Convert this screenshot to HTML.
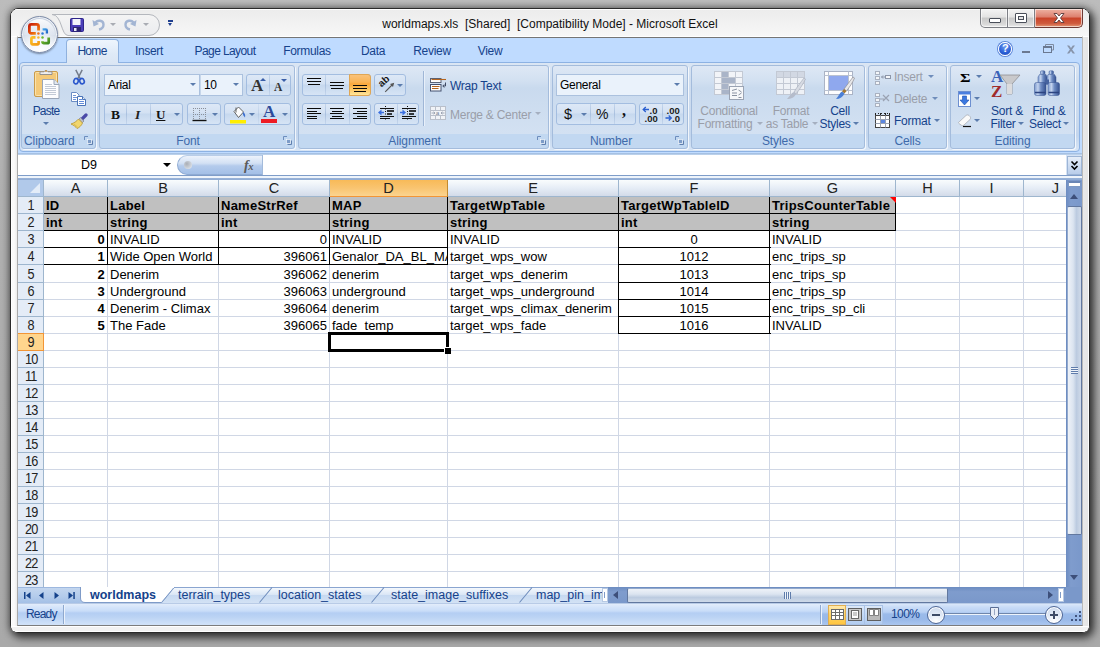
<!DOCTYPE html>
<html><head><meta charset="utf-8"><title>worldmaps.xls - Microsoft Excel</title>
<style>
html,body{margin:0;padding:0}
body{width:1100px;height:647px;overflow:hidden;position:relative;background:linear-gradient(#bcbcbc,#b0b0b0 30%,#a9a9a9);font-family:"Liberation Sans",sans-serif;font-size:12px;color:#15428b}
#win{position:absolute;left:0;top:0;width:1100px;height:647px}
#win div,#win span,#win i,#win b,#win svg{position:absolute;box-sizing:border-box}
.frame{left:10px;top:8px;width:1080px;height:625px;border:1px solid #2a2a2a;border-radius:8px;background:linear-gradient(90deg,#f6f6f6,#fbfbfb 3px,#e6e6e6 7px,#fcfcfc 8px,#fcfcfc 1066px,#e9e9e9 1072px,#e4e4e4);box-shadow:3px 4px 9px 1px rgba(0,0,0,.62),0 0 7px 1px rgba(0,0,0,.35)}
.frame:after{content:"";position:absolute;left:0;top:0;right:0;bottom:0;border:1px solid rgba(255,255,255,.9);border-radius:7px}
.t{white-space:nowrap;line-height:14px}
/* title */
.title{left:250px;top:17px;width:600px;text-align:center;color:#111;font-size:12px;line-height:14px;white-space:pre;letter-spacing:0}
/* tab bar */
.tabbar{left:18px;top:37px;width:1064px;height:26px;background:#bfdbff;border-top:1px solid #757575}
.tab{top:44px;letter-spacing:-.3px;height:15px;line-height:15px;font-size:12px;color:#15428b;white-space:nowrap;transform:translateX(-50%)}
.hometab{left:66px;top:39px;width:53px;height:24px;border:1px solid #8fb1de;border-bottom:0;border-radius:4px 4px 0 0;background:linear-gradient(#eef5fd,#dfeaf7 60%,#dbe6f4)}
/* ribbon */
.ribbon{left:18px;top:62px;width:1064px;height:91px;background:#bfdbff}
.ribin{left:1px;top:0;width:1061px;height:90px;border:1px solid #8db2e3;border-radius:4px;background:linear-gradient(#dbe6f4,#d0def0 18%,#c8d9ee 70%,#c3d6ee 82%,#d7e5f6);}
.grp{top:65px;height:84px;border:1px solid #a4bcdc;border-radius:3px;background:linear-gradient(#dee8f5,#d2e0f1 15px,#c9daee 22px,#d3e1f2 68px,#c2d8f1 68px,#c2d8f1);box-shadow:1px 1px 0 rgba(255,255,255,.75)}
.grp>.lbl{left:0;right:0;bottom:0;height:15px;line-height:17px;letter-spacing:-.1px;text-align:center;color:#3e6aaa;font-size:12px}
.dl{width:9px;height:9px}
.bg{border:1px solid #a3bde0;border-radius:3px;background:linear-gradient(#dde8f6,#d3e1f3 45%,#c6d8ee 50%,#d6e4f5);height:22px}
.bg i{top:0;width:1px;height:20px;background:linear-gradient(#c5d6ec,#a9c0df 50%,#c5d6ec)}
.combo{border:1px solid #abc1de;background:#eaf2fb;height:22px;line-height:21px;letter-spacing:-.3px;color:#000;font-size:12px;padding-left:3px}
.arr{width:0;height:0;border-left:3px solid transparent;border-right:3px solid transparent;border-top:3px solid #5b7cad}
.bt{margin-top:1px;letter-spacing:-.25px;font-size:12px;color:#15428b;white-space:nowrap;line-height:13px}
#win .dis{color:#9a9ea9}
.ctr{transform:translateX(-50%);text-align:center}
/* formula bar */
.fbarbg{left:18px;top:153px;width:1064px;height:27px;background:#d5e3f5}
/* grid */
#grid{left:18px;top:180px;width:1048px;height:407px;background:#fff;overflow:hidden;font-size:13px;color:#000}
.corner{left:0;top:0;width:26px;height:17px;background:#b1c9ea;border-right:1px solid #9eb6ce;border-bottom:1px solid #9eb6ce}
.corner i{right:3px;bottom:3px;width:0;height:0;border-left:10px solid transparent;border-bottom:10px solid #e3ecf8}
.ch{top:0;height:17px;line-height:16px;text-align:center;background:linear-gradient(#f9fcfd,#e6edf6 50%,#d3dbe9);border-bottom:1px solid #9eb6ce;font-size:14.6px;color:#222;box-shadow:1px 0 0 #9eb6ce}
.ch.sel{background:linear-gradient(#f8ba58,#f9c470 50%,#fbd48f);border-bottom:1px solid #f29536;box-shadow:1px 0 0 #c28a30}
.rh{left:0;width:26px;text-align:center;padding-left:1px;background:#e4ecf7;border-right:1px solid #9eb6ce;box-shadow:0 1px 0 #9eb6ce;font-size:14.6px;color:#222}
.rh.sel{background:#ffd58d;border-right:1px solid #f29536;box-shadow:0 1px 0 #f29536,0 -1px 0 #f29536}
.hl{left:26px;width:1030px;height:1px;background:#d0d7e5}
.vl{top:17px;width:1px;height:400px;background:#d0d7e5}
.gray{background:#c0c0c0}
.c{white-space:nowrap;overflow:visible;padding:0 2px 0 2px}
.c.b{font-weight:bold;letter-spacing:.25px}
.c.r{text-align:right}
.c.m{text-align:center}
.c.clip{overflow:hidden}
.bh{height:1px;background:#000}
.bv{width:1px;background:#000}
.cmt{width:0;height:0;border-left:6px solid transparent;border-top:6px solid #f00;transform:translateX(1px)}
.selbox{border:3px solid #000}
.fillh{width:7px;height:7px;background:#000;border-left:1px solid #fff;border-top:1px solid #fff}
/* formula bar */
.fb-top{left:18px;top:153px;width:1064px;height:2px;background:linear-gradient(#9cb9de,#c4d8f0)}
.namebox{left:18px;top:155px;width:159px;height:20px;background:#fff;color:#000;font-size:12.5px;line-height:20px}
.namebox span{left:63px;top:0}
.fxzone{left:177px;top:155px;width:85px;height:20px;background:#fff}
.fxpill{left:0;top:0;width:85px;height:20px;border-radius:10px 0 0 10px;background:linear-gradient(#edf3fb,#d3e1f4 40%,#b4cbec 55%,#a3bfe7);border:1px solid #8fabd3;border-right:0;border-top-color:#b9cde8}
.fxin{left:262px;top:155px;width:804px;height:20px;background:#fff;border-left:1px solid #a3bbdb}
.fxexp{left:1067px;top:156px;width:15px;height:19px;background:linear-gradient(#e6eef9,#cfdef2 50%,#b9cdea);border:1px solid #9db5d6}
.fb-bot{left:18px;top:175px;width:1064px;height:5px;background:linear-gradient(#7f9dc9 0,#7f9dc9 1px,#eef4fb 1px,#eef4fb 3px,#9ab4d9 3px,#8eaad3 5px)}
/* scrollbars */
.vsb{left:1066px;top:180px;width:16px;height:407px;background:linear-gradient(90deg,#6c8cc1,#7f9ccd 30%,#7a98ca)}
.vsplit{left:2px;top:1px;width:13px;height:6px;background:#fff;border:1px solid #7d99c4;border-top:2px solid #6a86b5}
.thumbv{left:1px;top:26px;width:15px;height:329px;border:1px solid #62789f;border-left-color:#93a9cc;border-radius:2px;background:linear-gradient(90deg,#eef2f8,#dbe4f0 40%,#bccbe0 65%,#cfdae9)}
.hsb{left:608px;top:587px;width:458px;height:16px;background:linear-gradient(#6c8cc1,#7f9ccd 30%,#7a98ca)}
.thumbh{left:19px;top:1px;width:321px;height:15px;border:1px solid #62789f;border-top-color:#93a9cc;border-radius:2px;background:linear-gradient(#eef2f8,#dbe4f0 40%,#bccbe0 65%,#cfdae9)}
.sbcorner{left:1066px;top:587px;width:16px;height:16px;background:#7a98ca}
.tri{width:0;height:0}
/* sheet tabs */
.tabstrip{left:18px;top:587px;width:590px;height:16px;background:linear-gradient(#9db8df 0,#9db8df 1px,#c3d6ef 1px,#b3cbeb 60%,#a4c0e6);overflow:hidden}
.stab{top:1px;height:15px;line-height:14px;font-size:12.5px;color:#15428b;white-space:nowrap}
.split{left:602px;top:588px;width:6px;height:14px;background:#fff;border:1px solid #b7c9e3}
/* status bar */
.status{left:18px;top:603px;width:1064px;height:22px;background:linear-gradient(#8ea9d2 0,#e3edfb 1px,#d6e5fa 4px,#c9ddf8 8px,#b4cef3 10px,#bbd3f4 14px,#cfe1f8 21px);font-size:12px}
.status2{left:804px;top:1px;width:260px;height:21px;background:linear-gradient(#dbe8fa 0,#c9dcf7 3px,#b9d1f4 8px,#9bbbea 10px,#98b8e8 15px,#aac6ef 21px)}
.ssep{top:2px;width:2px;height:19px;background:linear-gradient(90deg,#8fa9cf,#8fa9cf 1px,#eaf1fb 1px)}
.wbtns{left:980px;top:9px;width:103px;height:19px}
.wb{top:0;height:19px;border:1px solid #7d7f85;border-top:0;background:linear-gradient(#f4f4f4,#e3e3e3 45%,#c8c8c8 50%,#d9d9d9 85%,#ececec);box-shadow:inset 0 0 0 1px rgba(255,255,255,.6)}
.wb.cl{background:linear-gradient(#eeb3a4,#dd7f6d 45%,#c9432a 50%,#cf5a3d 80%,#e59a78);border-color:#6e3a35;border-left:0}
/* office button */
.obtn{left:21px;top:16px;width:37px;height:37px;border-radius:50%;border:1px solid #7e8ca8;background:radial-gradient(circle at 50% 100%,#ffffff 0,#f2f5fa 35%,#d5dde9 60%,#c3cddd 100%);box-shadow:0 1px 2px rgba(0,0,0,.4),inset 0 0 0 1px rgba(255,255,255,.7)}
.obtn:after{content:"";position:absolute;left:2px;top:2px;right:2px;height:16px;border-radius:16px 16px 0 0/16px 16px 0 0;background:linear-gradient(rgba(255,255,255,.9),rgba(226,232,243,.55))}
.zc{top:3px;width:18px;height:18px;border-radius:50%;border:1px solid #4f6796;background:radial-gradient(circle at 50% 90%,#fff,#dfe8f5 50%,#c9d6ea);box-shadow:inset 0 0 0 1px #fff}
#win .rh span{position:static;display:inline-block;transform:scaleX(.87);letter-spacing:-.8px}
.cborder{left:17px;top:36px;width:1066px;height:590px;border:1px solid #a9a9a9;border-right-color:#b9b9b9;border-top-color:#fff;border-bottom-color:#7c7c7c}
.tbar{left:11px;top:9px;width:1078px;height:28px;border-radius:7px 7px 0 0;background:linear-gradient(#fff 0,#fff 1px,#ececec 1px,#f7f7f7 27px,#fff 27px)}
.bstrip{left:11px;top:626px;width:1078px;height:6px;background:#f2f2f2;border-top:1px solid #fff;border-bottom:1px solid #fff;border-radius:0 0 7px 7px}

</style></head>
<body>
<div id="win">
<div class="frame"></div>
<div class="tbar"></div>
<div class="bstrip"></div>
<div class="cborder"></div>
<div class="title">worldmaps.xls  [Shared]  [Compatibility Mode] - Microsoft Excel</div>
<!-- QAT -->
<svg style="left:40px;top:12px" width="124" height="26" viewBox="0 0 124 26">
<defs><linearGradient id="qg" x1="0" y1="0" x2="0" y2="1"><stop offset="0" stop-color="#f4f4f4"/><stop offset="1" stop-color="#ebecef"/></linearGradient></defs>
<path d="M12 2.500H109a10.500 10.500 0 0 1 0 21H28C21 23.500 22 2.500 12 2.500z" fill="url(#qg)" stroke="#b4b7bd"/>
</svg>
<svg style="left:70px;top:18px" width="14" height="14" viewBox="0 0 14 14"><rect x=".5" y=".5" width="13" height="13" rx="1" fill="#4a3db8" stroke="#2e2589"/><rect x="2.500" y="1" width="8" height="6" fill="#f3f4fb"/><rect x="3" y="9" width="8" height="4.500" fill="#2b2470"/><rect x="4" y="10" width="2.500" height="3" fill="#e9e9f4"/></svg>
<svg style="left:92px;top:17px" width="14" height="14" viewBox="0 0 14 14"><path d="M3 6.500C5 2.500 11.500 3 11.500 7.500c0 3-2 4.500-4.500 5" fill="none" stroke="#a3b5d3" stroke-width="2.400"/><path d="M.5 3l1 6.500 5.500-2.500z" fill="#a3b5d3"/></svg>
<div class="arr" style="left:110px;top:23px;border-top-color:#a9acb3"></div>
<svg style="left:123px;top:17px" width="14" height="14" viewBox="0 0 14 14"><path d="M11 6.500C9 2.500 2.500 3 2.500 7.500c0 3 2 4.500 4.500 5" fill="none" stroke="#a3b5d3" stroke-width="2.400"/><path d="M13.500 3l-1 6.500-5.500-2.500z" fill="#a3b5d3"/></svg>
<div class="arr" style="left:143px;top:23px;border-top-color:#a9acb3"></div>
<div style="left:168px;top:20px;width:5px;height:1.500px;background:#1f3f8f"></div>
<div class="tri" style="left:168px;top:23px;border-left:2.500px solid transparent;border-right:2.500px solid transparent;border-top:3px solid #1f3f8f"></div>
<!-- window buttons -->
<div class="wbtns">
<div class="wb" style="left:0;width:28px;border-radius:0 0 0 5px"><i style="left:8px;top:9px;width:12px;height:5px;border:1px solid #4a4f5a;background:#fff;border-radius:1px"></i></div>
<div class="wb" style="left:28px;width:27px;border-left:0"><i style="left:7px;top:4px;width:12px;height:10px;border:1px solid #4a4f5a;background:#fff;border-radius:1px"></i><i style="left:10px;top:7px;width:6px;height:4px;border:1px solid #4a4f5a;background:#e4e4e4"></i></div>
<div class="wb cl" style="left:55px;width:48px;border-radius:0 0 5px 0">
<svg style="left:17px;top:3px" width="14" height="12" viewBox="0 0 14 12"><path d="M2 1.500h3l2 2.500 2-2.500h3l-3.500 4.500 3.500 4.500h-3l-2-2.500-2 2.500h-3l3.500-4.500z" fill="#fff" stroke="#5a3a3a" stroke-width=".9"/></svg></div>
</div>
<div class="tabbar"></div>
<div class="ribbon"><div class="ribin"></div></div>
<div class="hometab"></div>
<div class="tab" style="left:92px;letter-spacing:-.7px">Home</div>
<div class="tab" style="left:149px">Insert</div>
<div class="tab" style="left:225px;letter-spacing:-.6px">Page Layout</div>
<div class="tab" style="left:307px">Formulas</div>
<div class="tab" style="left:373px">Data</div>
<div class="tab" style="left:432px">Review</div>
<div class="tab" style="left:490px">View</div>
<!-- help / mdi buttons -->
<div style="left:998px;top:42px;width:14px;height:14px;border-radius:50%;background:radial-gradient(circle at 50% 30%,#6f9bf0,#2a5fd6 60%,#1c47b4);border:1px solid #fff;box-shadow:0 0 0 1px #5e86d8"><span style="left:3px;top:-1px;color:#fff;font-weight:bold;font-size:11px;line-height:13px">?</span></div>
<div style="left:1022px;top:51px;width:8px;height:2px;background:#6a7890"></div>
<svg style="left:1043px;top:44px" width="11" height="9" viewBox="0 0 11 9"><path d="M2.500 2.500V.5h8v5.500h-2" fill="none" stroke="#7d8aa0"/><rect x=".5" y="2.500" width="8" height="6" fill="#bfdbff" stroke="#6a7890"/><path d="M.5 3.500h8" stroke="#6a7890"/></svg>
<svg style="left:1066px;top:45px" width="10" height="9" viewBox="0 0 10 9"><path d="M1 .5h2.200l1.800 2.500 1.800-2.500h2.200l-2.900 4 2.900 4h-2.200l-1.800-2.500-1.800 2.500h-2.200l2.900-4z" fill="#8794aa"/></svg>
<!-- office button -->
<div class="obtn"></div>
<svg style="left:21px;top:16px" width="37" height="37" viewBox="21 16 37 37">
<defs>
<linearGradient id="lr" x1="0" y1="0" x2="1" y2="1"><stop offset="0" stop-color="#c8200a"/><stop offset=".6" stop-color="#e8590c"/><stop offset="1" stop-color="#f59a14"/></linearGradient>
<linearGradient id="ly" x1="0" y1="0" x2="1" y2="1"><stop offset="0" stop-color="#fbc02a"/><stop offset="1" stop-color="#f39a12"/></linearGradient>
<linearGradient id="lb" x1="0" y1="0" x2="1" y2="1"><stop offset="0" stop-color="#4aa8ea"/><stop offset="1" stop-color="#1f62c4"/></linearGradient>
<linearGradient id="lg" x1="0" y1="0" x2="1" y2="1"><stop offset="0" stop-color="#7cc02e"/><stop offset="1" stop-color="#3f8a22"/></linearGradient>
</defs>
<path d="M38.600 30.500V26.300a2 2 0 0 0 -2-2H31.400a2 2 0 0 0 -2 2V31.400a2 2 0 0 0 2 2H35.800" fill="none" stroke="url(#lr)" stroke-width="2.800"/>
<circle cx="38.400" cy="33.400" r="1.250" fill="#f0701a"/>
<path d="M42.600 29.300H45.600a1.300 1.300 0 0 1 1.300 1.300V33.600" fill="none" stroke="url(#lb)" stroke-width="2.300"/>
<circle cx="42.500" cy="33.400" r="1.250" fill="#2a78d8"/>
<path d="M35.500 37.400H32.700a1.300 1.300 0 0 0 -1.300 1.300V43.100a1.300 1.300 0 0 0 1.300 1.300H37.300a1.300 1.300 0 0 0 1.300-1.300V41" fill="none" stroke="url(#ly)" stroke-width="2.700"/>
<circle cx="38.400" cy="37.500" r="1.250" fill="#f8b530"/>
<path d="M42.500 41.300V41.900a1.300 1.300 0 0 0 1.300 1.300H47.400a1.300 1.300 0 0 0 1.300-1.300V37.600" fill="none" stroke="url(#lg)" stroke-width="2.700"/>
<circle cx="42.500" cy="37.500" r="1.250" fill="#6ab82c"/>
</svg>
<!-- Clipboard -->
<div class="grp" style="left:21px;width:75px"><div class="lbl" style="text-align:left;padding-left:2px">Clipboard</div>
<svg class="dl" style="left:62px;top:70px" width="9" height="9" viewBox="0 0 9 9"><path d="M0.500 4V0.500H4" fill="none" stroke="#6d8dbd"/><rect x="3.500" y="3.500" width="4" height="4" fill="#7d9cc8" stroke="#fff" stroke-width=".6"/><path d="M8.500 4.500v4h-4" fill="none" stroke="#5f7fae"/></svg>
</div>
<svg style="left:32px;top:67px" width="30" height="33" viewBox="0 0 30 33">
<rect x="2.500" y="4.500" width="23" height="25" rx="1.500" fill="#f4c978" stroke="#c99b4c"/>
<rect x="3.500" y="5.500" width="21" height="23" rx="1" fill="none" stroke="#fbe2ab"/>
<path d="M8 7.500V4.800h4a2.200 2.200 0 0 1 4 0h4V7.500z" fill="#ededee" stroke="#7d7f85" stroke-width=".8"/>
<circle cx="14" cy="4" r=".9" fill="#c98f3a"/>
<path d="M10.500 12.500h11.500l5 5v14h-16.500z" fill="#fdfdfe" stroke="#9aa6b8"/>
<path d="M22 12.500v5h5" fill="#e2e8f0" stroke="#9aa6b8"/>
<path d="M13 17.500h7M13 19.500h11M13 21.500h11M13 23.500h11M13 25.500h11M13 27.500h11" stroke="#c3cad6" stroke-width="1"/>
</svg>
<div class="bt ctr" style="left:46px;top:104px;letter-spacing:-.8px">Paste</div>
<div class="arr" style="left:43px;top:122px"></div>
<svg style="left:72px;top:69px" width="14" height="16" viewBox="0 0 14 16"><path d="M3.800 .8L8.700 10.500M10.200 .8L5.300 10.500" stroke="#747c8a" stroke-width="1.500" fill="none"/><ellipse cx="4" cy="12.200" rx="2.200" ry="2.700" fill="none" stroke="#2c58cc" stroke-width="1.700" transform="rotate(20 4 12.200)"/><ellipse cx="10" cy="12.200" rx="2.200" ry="2.700" fill="none" stroke="#2c58cc" stroke-width="1.700" transform="rotate(-20 10 12.200)"/></svg>
<svg style="left:70px;top:91px" width="18" height="16" viewBox="0 0 18 16"><path d="M1.500 1.500h5l2.500 2.500v6.500h-7.500z" fill="#fff" stroke="#6a8cc4"/><path d="M3 4.500h3M3 6.500h4.500M3 8.500h3" stroke="#5f87d0" stroke-width=".9"/><path d="M7.500 5.500h5l3 3v6h-8z" fill="#fff" stroke="#4a74b8"/><path d="M12.500 5.500v3h3" fill="#dfe8f6" stroke="#4a74b8"/><path d="M9 8.500h3M9 10.500h5M9 12.500h5" stroke="#4f7fd6" stroke-width=".9"/></svg>
<svg style="left:70px;top:113px" width="18" height="16" viewBox="0 0 18 16"><path d="M16 2L12.500 5.500" stroke="#4a4aa8" stroke-width="3.200" stroke-linecap="round"/><path d="M10.500 4.500l3.500 3.500-1.800 1.800-3.500-3.500z" fill="#b9bdc8" stroke="#70768a" stroke-width=".6"/><path d="M8.500 6l4 4c-1 2.500-3 4.500-5.500 5.500c-1-1.500-3.500-3.500-6-4.500c3-1 5.500-2.500 7.500-5z" fill="#f1d66e" stroke="#b8962e" stroke-width=".8"/><path d="M4 11l3.500 3" stroke="#d5b548" stroke-width=".8"/></svg>

<!-- Font -->
<div class="grp" style="left:99px;width:196px"><div class="lbl" style="padding-right:18px">Font</div>
<svg class="dl" style="left:183px;top:70px" width="9" height="9" viewBox="0 0 9 9"><path d="M0.500 4V0.500H4" fill="none" stroke="#6d8dbd"/><rect x="3.500" y="3.500" width="4" height="4" fill="#7d9cc8" stroke="#fff" stroke-width=".6"/><path d="M8.500 4.500v4h-4" fill="none" stroke="#5f7fae"/></svg>
</div>
<div class="combo" style="left:104px;top:74px;width:96px">Arial<div class="arr" style="left:85px;top:8px"></div></div>
<div class="combo" style="left:200px;top:74px;width:43px;border-left-color:#c6d6ea">10<div class="arr" style="left:32px;top:8px"></div></div>
<div class="bg" style="left:246px;top:74px;width:45px"><i style="left:22px"></i>
<div class="t" style="left:4px;top:2px;font-family:'Liberation Serif',serif;font-weight:bold;font-size:17px;color:#333;line-height:18px">A</div>
<div class="tri" style="left:13px;top:3px;border-left:3px solid transparent;border-right:3px solid transparent;border-bottom:3px solid #3a5fa8"></div>
<div class="t" style="left:27px;top:6px;font-family:'Liberation Serif',serif;font-weight:bold;font-size:11.5px;color:#333;line-height:13px">A</div>
<div class="tri" style="left:34px;top:4px;border-left:3px solid transparent;border-right:3px solid transparent;border-top:3px solid #3a5fa8"></div>
</div>
<div class="bg" style="left:104px;top:103px;width:79px"><i style="left:21px"></i><i style="left:45px"></i>
<div class="t" style="left:6px;top:3px;font-family:'Liberation Serif',serif;font-weight:bold;font-size:13.5px;color:#111;line-height:15px">B</div>
<div class="t" style="left:30px;top:3px;font-family:'Liberation Serif',serif;font-style:italic;font-weight:bold;font-size:13.5px;color:#222;line-height:15px">I</div>
<div class="t" style="left:51px;top:3px;font-family:'Liberation Serif',serif;font-weight:bold;font-size:13px;color:#111;line-height:15px;text-decoration:underline">U</div>
<div class="arr" style="left:69px;top:9px"></div>
</div>
<div class="bg" style="left:187px;top:103px;width:34px">
<svg style="left:4px;top:3px" width="15" height="15" viewBox="0 0 15 15"><path d="M1.500 1v12M7.500 1v12M13.500 1v12M1 1.500h13M1 7.500h13" stroke="#8a8f99" stroke-dasharray="1 1" fill="none"/><path d="M0.500 13.500h14" stroke="#111" stroke-width="1.400"/></svg>
<div class="arr" style="left:24px;top:9px"></div>
</div>
<div class="bg" style="left:224px;top:103px;width:67px"><i style="left:33px;opacity:.5"></i>
<svg style="left:4px;top:1px" width="18" height="19" viewBox="0 0 18 19"><rect x="1" y="15" width="16" height="3.500" fill="#ffee00"/><path d="M5 6.500L9.500 2l5 5-5 5.500z" fill="#fdfdfd" stroke="#555" stroke-width=".9"/><path d="M7 2.500v5" stroke="#555" stroke-width=".9"/><path d="M14 7c2 1 2.500 3 2 5.500-1.500-1.500-2.500-3-2-5.500z" fill="#3d6fd0"/></svg>
<div class="arr" style="left:24px;top:9px"></div>
<div class="t" style="left:38px;top:-1px;font-family:'Liberation Serif',serif;font-weight:bold;font-size:17px;color:#2d4b9b;line-height:18px">A</div>
<div style="left:36px;top:15px;width:16px;height:4px;background:#ee1c24"></div>
<div class="arr" style="left:57px;top:9px"></div>
</div>

<!-- Alignment -->
<div class="grp" style="left:298px;width:251px"><div class="lbl" style="padding-right:18px">Alignment</div>
<svg class="dl" style="left:238px;top:70px" width="9" height="9" viewBox="0 0 9 9"><path d="M0.500 4V0.500H4" fill="none" stroke="#6d8dbd"/><rect x="3.500" y="3.500" width="4" height="4" fill="#7d9cc8" stroke="#fff" stroke-width=".6"/><path d="M8.500 4.500v4h-4" fill="none" stroke="#5f7fae"/></svg>
</div>
<div class="bg" style="left:302px;top:74px;width:69px"><i style="left:22px"></i><i style="left:46px"></i>
<div style="left:46px;top:-1px;width:22px;height:22px;background:linear-gradient(#f9c27a,#fbb455 35%,#fba83c 45%,#fdc45f 70%,#ffe69c);border:1px solid #e0a654;border-radius:0 3px 3px 0"></div>
<svg style="left:0;top:0" width="67" height="20" viewBox="0 0 67 20"><path d="M4 3.5H18M4 6.5H18M5 9.5H17M27 7.5H41M27 10.5H41M28 13.5H40M50 10.5H64M50 13.5H64M51 16.5H63" stroke="#0a0a0a" stroke-width="1.200" fill="none"/></svg>
</div>
<div class="bg" style="left:374px;top:74px;width:32px">
<svg style="left:3px;top:2px" width="19" height="17" viewBox="0 0 19 17"><text x="0" y="0" font-family="Liberation Sans" font-size="10" font-weight="bold" fill="#1a1a1a" transform="translate(3.500 10.500) rotate(-42)">ab</text><path d="M7.200 14.800L14.500 7.500" stroke="#555" stroke-width="1.100"/><path d="M16.200 5.800l-4.200 1.200 3 3z" fill="#555"/></svg>
<div class="arr" style="left:22px;top:9px"></div>
</div>
<div class="bg" style="left:302px;top:103px;width:69px"><i style="left:22px"></i><i style="left:46px"></i>
<svg style="left:0;top:0" width="67" height="20" viewBox="0 0 67 20"><path d="M4 4.500H18M4 7.500H14M4 9.500H18M4 12.500H14M4 14.500H14M27 4.500H41M29 7.500H39M27 9.500H41M29 12.500H39M27 14.500H41M50 4.500H64M54 7.500H64M50 9.500H64M54 12.500H64M50 14.500H64" stroke="#0a0a0a" stroke-width="1.150" fill="none"/></svg>
</div>
<div class="bg" style="left:374px;top:103px;width:45px"><i style="left:22px"></i>
<svg style="left:0;top:0" width="43" height="20" viewBox="0 0 43 20"><path d="M10.5 2V17" stroke="#111" stroke-dasharray="1 1.500" fill="none"/><path d="M5 4.500H19M5 12.500H19M5 14.500H15" stroke="#111" stroke-width="1.200" fill="none"/><path d="M12 7H19M12 10H17" stroke="#000" stroke-width="1.700" fill="none"/><path d="M3 8.5l3.500-3v6z" fill="#3a6fe0"/><path d="M6 8.5h3" stroke="#3a6fe0" stroke-width="1.500"/><path d="M32.5 2V17" stroke="#111" stroke-dasharray="1 1.500" fill="none"/><path d="M27 4.500H41M27 12.500H41M27 14.500H37" stroke="#111" stroke-width="1.200" fill="none"/><path d="M34 7H41M34 10H39" stroke="#000" stroke-width="1.700" fill="none"/><path d="M31 8.5l-3.500-3v6z" fill="#3a6fe0"/><path d="M25 8.5h3" stroke="#3a6fe0" stroke-width="1.500"/></svg>
</div>
<div style="left:423px;top:71px;width:2px;height:55px;background:linear-gradient(90deg,#9fb6d6 1px,#e8f0fa 1px)"></div>
<svg style="left:430px;top:76px" width="17" height="16" viewBox="0 0 17 16"><rect x=".5" y="2.500" width="10.500" height="4" fill="#fdfdfd" stroke="#5a6275"/><path d="M1.500 3.500H16" stroke="#b4641e" stroke-width="1.100"/><rect x=".5" y="8.500" width="10.500" height="6.500" fill="#fdfdfd" stroke="#43506e"/><path d="M2 10.500H9.500M2 12.500H8.500" stroke="#b4641e" stroke-width="1.100"/><path d="M15.500 6.500V10h-2.500M14.200 8.500L12.800 10l1.400 1.500" stroke="#3f4a63" fill="none" stroke-width="1"/></svg>
<div class="bt" style="left:450px;top:79px">Wrap Text</div>
<svg style="left:430px;top:105px" width="17" height="16" viewBox="0 0 17 16"><rect x=".5" y="1.500" width="15" height="13" fill="#f1f3f7" stroke="#b9bfca"/><path d="M.5 5.500h15M.5 10.500h15M5.500 1.500v4M10.500 1.500v4M5.500 10.500v4M10.500 10.500v4" stroke="#b9bfca"/><text x="5.800" y="10" font-family="Liberation Serif" font-weight="bold" font-size="7" fill="#8f97a8">a</text><path d="M1.500 8h3.500M11 8h3.500M3.500 6.800L5 8 3.500 9.200M12.500 6.800L11 8l1.500 1.200" stroke="#8f97a8" fill="none" stroke-width=".8"/></svg>
<div class="bt dis" style="left:450px;top:108px">Merge &amp; Center</div>
<div class="arr" style="left:535px;top:112px;border-top-color:#a5afc0"></div>

<!-- Number -->
<div class="grp" style="left:552px;width:136px"><div class="lbl" style="padding-right:18px">Number</div>
<svg class="dl" style="left:122px;top:70px" width="9" height="9" viewBox="0 0 9 9"><path d="M0.500 4V0.500H4" fill="none" stroke="#6d8dbd"/><rect x="3.500" y="3.500" width="4" height="4" fill="#7d9cc8" stroke="#fff" stroke-width=".6"/><path d="M8.500 4.500v4h-4" fill="none" stroke="#5f7fae"/></svg>
</div>
<div class="combo" style="left:556px;top:74px;width:128px">General<div class="arr" style="left:117px;top:8px"></div></div>
<div class="bg" style="left:556px;top:103px;width:80px"><i style="left:33px"></i><i style="left:57px"></i>
<div class="t" style="left:7px;top:2px;font-family:'Liberation Sans',sans-serif;font-size:14.500px;color:#111;line-height:16px">$</div>
<div class="arr" style="left:24px;top:9px"></div>
<div class="t" style="left:39px;top:2px;font-family:'Liberation Sans',sans-serif;font-size:14px;color:#111;line-height:16px">%</div>
<div class="t" style="left:65px;top:-2px;font-family:'Liberation Serif',serif;font-weight:bold;font-size:16px;color:#111;line-height:18px">,</div>
</div>
<div class="bg" style="left:639px;top:103px;width:45px"><i style="left:22px"></i>
<svg style="left:0;top:0" width="43" height="20" viewBox="0 0 43 20"><g font-family="Liberation Sans" font-size="9.500" font-weight="bold" fill="#1a1a1a"><text x="9.500" y="9.500">.0</text><text x="4.500" y="17.500">.00</text><text x="26.500" y="9.500">.00</text><text x="32" y="17.500">.0</text></g><path d="M3 5.500h6M5.800 3L3.200 5.500l2.600 2.500" stroke="#2a5fd0" fill="none" stroke-width="1.300"/><path d="M25.500 14h6M28.700 11.500l2.600 2.500-2.600 2.500" stroke="#2a5fd0" fill="none" stroke-width="1.300"/></svg>
</div>

<!-- Styles -->
<div class="grp" style="left:691px;width:174px"><div class="lbl">Styles</div></div>
<svg style="left:714px;top:71px" width="31" height="30" viewBox="0 0 31 30">
<rect x=".5" y=".5" width="28" height="23" fill="#f2f4f8" stroke="#c3c9d4"/>
<path d="M.5 6.500h28M.5 12.500h28M.5 18.500h28M7.500 .5v23M14.500 .5v23M21.500 .5v23" stroke="#c3c9d4"/>
<rect x="8" y="1" width="6" height="5" fill="#a9b4c8"/><rect x="8" y="7" width="13" height="5" fill="#a9b4c8"/><rect x="8" y="13" width="6" height="5" fill="#a9b4c8"/><rect x="8" y="19" width="10" height="4" fill="#a9b4c8"/>
<rect x="15.500" y="15.500" width="14" height="13" fill="#f7f8fa" stroke="#9aa3b3"/>
<path d="M18 22h5M18 24.500h5M18 19.500l5-1.500M24.500 19l3 2M24.500 24l3-2M24.500 26.500h3" stroke="#7e8797" stroke-width=".9" fill="none"/>
</svg>
<div class="bt dis ctr" style="left:729px;top:104px">Conditional</div>
<div class="bt dis ctr" style="left:725px;top:117px">Formatting</div>
<div class="arr" style="left:757px;top:122px;border-top-color:#a5afc0"></div>
<svg style="left:776px;top:71px" width="31" height="30" viewBox="0 0 31 30">
<rect x=".5" y=".5" width="28" height="23" fill="#eef1f6" stroke="#c3c9d4"/>
<rect x="1" y="1" width="27" height="5" fill="#d2d8e3"/>
<path d="M.5 6.500h28M.5 12.500h28M.5 18.500h28M7.500 .5v23M14.500 .5v23M21.500 .5v23" stroke="#c3c9d4"/>
<path d="M28 7c-3 4-7 9-10 14l2 2c4-5 7-10 9.500-15z" fill="#d7dbe3" stroke="#a8afbd" stroke-width=".7"/>
<path d="M18 21c-3 1-4 4-7 7 4 0 8-2 9-5z" fill="#b5bccb"/>
</svg>
<div class="bt dis ctr" style="left:791px;top:104px">Format</div>
<div class="bt dis ctr" style="left:787px;top:117px">as Table</div>
<div class="arr" style="left:812px;top:122px;border-top-color:#a5afc0"></div>
<svg style="left:824px;top:71px" width="32" height="30" viewBox="0 0 32 30">
<rect x=".5" y=".5" width="28" height="23" fill="#fdfdfe" stroke="#aab3c5"/>
<path d="M.5 4.500h28M.5 19.500h28M4.500 .5v23M24.500 .5v23" stroke="#b9c1d0"/>
<rect x="5" y="5" width="19" height="14" fill="#8fa8ee"/>
<path d="M29 6c-3 4-6 8-9 12l2.500 2c3-4 6-8 8-13z" fill="#e8e8ea" stroke="#8c8c94" stroke-width=".7"/>
<path d="M20 18l2.500 2-2 2.500-2.500-2z" fill="#a5782f"/>
<path d="M18 20.500c-2 1-3 4-6 7.500 4 0 7-2 8.500-5.500z" fill="#4a7fd6"/>
</svg>
<div class="bt ctr" style="left:840px;top:104px">Cell</div>
<div class="bt ctr" style="left:835px;top:117px">Styles</div>
<div class="arr" style="left:853px;top:122px"></div>

<!-- Cells -->
<div class="grp" style="left:868px;width:79px"><div class="lbl">Cells</div></div>
<svg style="left:875px;top:70px" width="18" height="16" viewBox="0 0 18 16"><rect x=".5" y="1.500" width="4" height="3" fill="#f4f6f9" stroke="#a9b1c0"/><rect x=".5" y="6.500" width="4" height="3" fill="#f4f6f9" stroke="#a9b1c0"/><rect x=".5" y="11.500" width="4" height="3" fill="#f4f6f9" stroke="#a9b1c0"/><rect x="10.500" y="5.500" width="5" height="3" fill="#f4f6f9" stroke="#8d96a8"/><path d="M10 7H6.500M8 5.500L6.500 7 8 8.500" stroke="#8d96a8" fill="none"/></svg>
<div class="bt dis" style="left:894px;top:70px">Insert</div>
<div class="arr" style="left:928px;top:75px;border-top-color:#6f8dbb"></div>
<svg style="left:875px;top:92px" width="18" height="16" viewBox="0 0 18 16"><rect x=".5" y="1.500" width="4" height="3" fill="#f4f6f9" stroke="#a9b1c0"/><rect x=".5" y="6.500" width="4" height="3" fill="#f4f6f9" stroke="#a9b1c0"/><rect x=".5" y="11.500" width="4" height="3" fill="#f4f6f9" stroke="#a9b1c0"/><path d="M5 7h4M8 3l6 6M14 3l-6 6" stroke="#9aa2b2" fill="none" stroke-width="1.200"/></svg>
<div class="bt dis" style="left:894px;top:92px">Delete</div>
<div class="arr" style="left:932px;top:97px;border-top-color:#6f8dbb"></div>
<svg style="left:874px;top:112px" width="18" height="17" viewBox="0 0 18 17"><rect x="1.500" y="3.500" width="14" height="12" fill="#fff" stroke="#444"/><path d="M1.500 7.500h14M1.500 11.500h14M6.500 3.500v12M11.500 3.500v12" stroke="#9aa2b2"/><rect x="7" y="8" width="4" height="3" fill="#5b86e0"/><path d="M1 1.500h15" stroke="#222" stroke-dasharray="1 2"/><path d="M1.500 1v2M6.500 1v2M11.500 1v2M15.500 1v2" stroke="#222"/></svg>
<div class="bt" style="left:894px;top:114px">Format</div>
<div class="arr" style="left:934px;top:119px"></div>

<!-- Editing -->
<div class="grp" style="left:950px;width:125px"><div class="lbl">Editing</div></div>
<div class="t" style="left:960px;top:69px;font-family:'Liberation Serif',serif;font-weight:bold;font-size:14px;color:#000;line-height:18px;transform:scale(1.15,.88);transform-origin:0 50%">&Sigma;</div>
<div class="arr" style="left:976px;top:75px"></div>
<svg style="left:958px;top:91px" width="14" height="17" viewBox="0 0 14 17"><rect x=".5" y=".5" width="12" height="15" fill="#fff" stroke="#6d8fd0"/><rect x="1" y="1" width="11" height="2.500" fill="#4b7fe0"/><path d="M4.500 5h4v4h2.500l-4.500 5-4.500-5h2.500z" fill="#3b78e0" stroke="#1d4fb0" stroke-width=".6"/></svg>
<div class="arr" style="left:974px;top:97px"></div>
<svg style="left:957px;top:113px" width="16" height="15" viewBox="0 0 16 15"><path d="M2 9l7-6.500c1-.8 2-.8 3 0l1 1c.8 1 .8 2 0 3l-6 5.500c-1 .8-2 .8-3 0l-2-1.500c-.7-.5-.7-1 0-1.500z" fill="#fafafa" stroke="#a9adb5" stroke-width=".8"/><path d="M6 13.500h8" stroke="#111" stroke-width="1.200"/></svg>
<div class="arr" style="left:974px;top:119px"></div>
<svg style="left:990px;top:68px" width="32" height="32" viewBox="0 0 32 32">
<text x="1" y="14" font-family="Liberation Serif" font-weight="bold" font-size="17" fill="#3a62b8">A</text>
<text x="1" y="29" font-family="Liberation Serif" font-weight="bold" font-size="17" fill="#a02c2c">Z</text>
<path d="M10 7h20l-8 9v10h-5v-10z" fill="#c9c9cb" stroke="#8f8f93" stroke-width=".8"/>
<path d="M17 16h5v10h-5z" fill="#dcdcde"/>
</svg>
<div class="bt ctr" style="left:1007px;top:104px">Sort &amp;</div>
<div class="bt ctr" style="left:1003px;top:117px">Filter</div>
<div class="arr" style="left:1018px;top:122px"></div>
<svg style="left:1033px;top:70px" width="30" height="28" viewBox="0 0 30 28">
<defs><linearGradient id="bn" x1="0" y1="0" x2="1" y2="0"><stop offset="0" stop-color="#7f9ccf"/><stop offset=".3" stop-color="#c3d3ee"/><stop offset=".55" stop-color="#6f8dc4"/><stop offset="1" stop-color="#34508e"/></linearGradient></defs>
<rect x="7.500" y=".8" width="4.500" height="3.500" rx="1.200" fill="url(#bn)" stroke="#3d5a98" stroke-width=".5"/><rect x="16" y=".8" width="4.500" height="3.500" rx="1.200" fill="url(#bn)" stroke="#3d5a98" stroke-width=".5"/>
<path d="M6.500 4.500h6.500l1 2.500v7h-9v-7z" fill="url(#bn)" stroke="#3d5a98" stroke-width=".5"/><path d="M15 4.500h6.500l1.500 2.500v7h-9v-7z" fill="url(#bn)" stroke="#3d5a98" stroke-width=".5"/>
<rect x="12" y="9.500" width="4" height="5" fill="#46639f"/>
<rect x="1.500" y="12.500" width="11.500" height="13" rx="2" fill="url(#bn)" stroke="#34508e" stroke-width=".5"/><rect x="15" y="12.500" width="11.500" height="13" rx="2" fill="url(#bn)" stroke="#34508e" stroke-width=".5"/>
<path d="M2 22.500h10.500M15.500 22.500h10.500" stroke="#2c4480" stroke-width="1.400"/>
</svg>
<div class="bt ctr" style="left:1049px;top:104px">Find &amp;</div>
<div class="bt ctr" style="left:1045px;top:117px">Select</div>
<div class="arr" style="left:1063px;top:122px"></div>
<div class="fbarbg"></div>
<div class="fb-top"></div>
<div class="namebox"><span>D9</span><div class="tri" style="left:145px;top:8px;border-left:4px solid transparent;border-right:4px solid transparent;border-top:4px solid #000"></div></div>
<div class="fxzone"><div class="fxpill">
<div style="left:6px;top:5px;width:8px;height:8px;border-radius:4px;background:radial-gradient(circle at 35% 35%,#a9aeb6,#d2d7de 65%,#eef2f7)"></div>
<div class="t" style="left:66px;top:2px;font-family:'Liberation Serif',serif;font-style:italic;font-weight:bold;font-size:14px;color:#5a5a5a;line-height:16px;letter-spacing:-.5px">f<span style="position:static !important;font-size:10.500px">x</span></div>
</div></div>
<div class="fxin"></div>
<div class="fxexp"><svg width="13" height="17" viewBox="0 0 13 17" style="left:0;top:0"><path d="M3.5 4.5 L6.5 7.5 L9.5 4.5 M3.5 9 L6.5 12 L9.5 9" fill="none" stroke="#000" stroke-width="1.6"/></svg></div>
<div class="fb-bot"></div>
<div id="grid">
<div class="corner"><i></i></div>
<div class="ch" style="left:26px;width:63px">A</div>
<div class="ch" style="left:90px;width:110px">B</div>
<div class="ch" style="left:201px;width:110px">C</div>
<div class="ch sel" style="left:312px;width:117px">D</div>
<div class="ch" style="left:430px;width:170px">E</div>
<div class="ch" style="left:601px;width:150px">F</div>
<div class="ch" style="left:752px;width:125px">G</div>
<div class="ch" style="left:878px;width:63px">H</div>
<div class="ch" style="left:942px;width:63px">I</div>
<div class="ch" style="left:1006px;width:63px">J</div>
<div class="rh" style="top:17px;height:16px;line-height:17px"><span>1</span></div>
<div class="rh" style="top:34px;height:16px;line-height:17px"><span>2</span></div>
<div class="rh" style="top:51px;height:16px;line-height:17px"><span>3</span></div>
<div class="rh" style="top:68px;height:16px;line-height:17px"><span>4</span></div>
<div class="rh" style="top:85px;height:17px;line-height:18px"><span>5</span></div>
<div class="rh" style="top:103px;height:16px;line-height:17px"><span>6</span></div>
<div class="rh" style="top:120px;height:16px;line-height:17px"><span>7</span></div>
<div class="rh" style="top:137px;height:16px;line-height:17px"><span>8</span></div>
<div class="rh sel" style="top:154px;height:16px;line-height:17px"><span>9</span></div>
<div class="rh" style="top:171px;height:16px;line-height:17px"><span>10</span></div>
<div class="rh" style="top:188px;height:16px;line-height:17px"><span>11</span></div>
<div class="rh" style="top:205px;height:16px;line-height:17px"><span>12</span></div>
<div class="rh" style="top:222px;height:16px;line-height:17px"><span>13</span></div>
<div class="rh" style="top:239px;height:16px;line-height:17px"><span>14</span></div>
<div class="rh" style="top:256px;height:16px;line-height:17px"><span>15</span></div>
<div class="rh" style="top:273px;height:16px;line-height:17px"><span>16</span></div>
<div class="rh" style="top:290px;height:16px;line-height:17px"><span>17</span></div>
<div class="rh" style="top:307px;height:16px;line-height:17px"><span>18</span></div>
<div class="rh" style="top:324px;height:16px;line-height:17px"><span>19</span></div>
<div class="rh" style="top:341px;height:16px;line-height:17px"><span>20</span></div>
<div class="rh" style="top:358px;height:16px;line-height:17px"><span>21</span></div>
<div class="rh" style="top:375px;height:16px;line-height:17px"><span>22</span></div>
<div class="rh" style="top:392px;height:16px;line-height:17px"><span>23</span></div>
<div class="hl" style="top:33px"></div>
<div class="hl" style="top:50px"></div>
<div class="hl" style="top:67px"></div>
<div class="hl" style="top:84px"></div>
<div class="hl" style="top:102px"></div>
<div class="hl" style="top:119px"></div>
<div class="hl" style="top:136px"></div>
<div class="hl" style="top:153px"></div>
<div class="hl" style="top:170px"></div>
<div class="hl" style="top:187px"></div>
<div class="hl" style="top:204px"></div>
<div class="hl" style="top:221px"></div>
<div class="hl" style="top:238px"></div>
<div class="hl" style="top:255px"></div>
<div class="hl" style="top:272px"></div>
<div class="hl" style="top:289px"></div>
<div class="hl" style="top:306px"></div>
<div class="hl" style="top:323px"></div>
<div class="hl" style="top:340px"></div>
<div class="hl" style="top:357px"></div>
<div class="hl" style="top:374px"></div>
<div class="hl" style="top:391px"></div>
<div class="hl" style="top:408px"></div>
<div class="vl" style="left:89px"></div>
<div class="vl" style="left:200px"></div>
<div class="vl" style="left:311px"></div>
<div class="vl" style="left:429px"></div>
<div class="vl" style="left:600px"></div>
<div class="vl" style="left:751px"></div>
<div class="vl" style="left:877px"></div>
<div class="vl" style="left:941px"></div>
<div class="vl" style="left:1005px"></div>
<div class="vl" style="left:1069px"></div>
<div class="gray" style="left:26px;top:17px;width:852px;height:33px"></div>
<div class="c b" style="left:26px;top:17px;width:63px;height:16px;line-height:18px">ID</div>
<div class="c b" style="left:90px;top:17px;width:110px;height:16px;line-height:18px">Label</div>
<div class="c b" style="left:201px;top:17px;width:110px;height:16px;line-height:18px">NameStrRef</div>
<div class="c b" style="left:312px;top:17px;width:117px;height:16px;line-height:18px">MAP</div>
<div class="c b" style="left:430px;top:17px;width:170px;height:16px;line-height:18px">TargetWpTable</div>
<div class="c b" style="left:601px;top:17px;width:150px;height:16px;line-height:18px">TargetWpTableID</div>
<div class="c b" style="left:752px;top:17px;width:125px;height:16px;line-height:18px">TripsCounterTable</div>
<div class="c b" style="left:26px;top:34px;width:63px;height:16px;line-height:18px">int</div>
<div class="c b" style="left:90px;top:34px;width:110px;height:16px;line-height:18px">string</div>
<div class="c b" style="left:201px;top:34px;width:110px;height:16px;line-height:18px">int</div>
<div class="c b" style="left:312px;top:34px;width:117px;height:16px;line-height:18px">string</div>
<div class="c b" style="left:430px;top:34px;width:170px;height:16px;line-height:18px">string</div>
<div class="c b" style="left:601px;top:34px;width:150px;height:16px;line-height:18px">int</div>
<div class="c b" style="left:752px;top:34px;width:125px;height:16px;line-height:18px">string</div>
<div class="c b r" style="left:26px;top:51px;width:63px;height:16px;line-height:18px">0</div>
<div class="c" style="left:90px;top:51px;width:110px;height:16px;line-height:18px">INVALID</div>
<div class="c r" style="left:201px;top:51px;width:110px;height:16px;line-height:18px">0</div>
<div class="c" style="left:312px;top:51px;width:117px;height:16px;line-height:18px">INVALID</div>
<div class="c" style="left:430px;top:51px;width:170px;height:16px;line-height:18px">INVALID</div>
<div class="c m" style="left:601px;top:51px;width:150px;height:16px;line-height:18px">0</div>
<div class="c" style="left:752px;top:51px;width:125px;height:16px;line-height:18px">INVALID</div>
<div class="c b r" style="left:26px;top:68px;width:63px;height:16px;line-height:18px">1</div>
<div class="c" style="left:90px;top:68px;width:110px;height:16px;line-height:18px">Wide Open World</div>
<div class="c r" style="left:201px;top:68px;width:110px;height:16px;line-height:18px">396061</div>
<div class="c clip" style="left:312px;top:68px;width:117px;height:16px;line-height:18px">Genalor_DA_BL_MA</div>
<div class="c" style="left:430px;top:68px;width:170px;height:16px;line-height:18px">target_wps_wow</div>
<div class="c m" style="left:601px;top:68px;width:150px;height:16px;line-height:18px">1012</div>
<div class="c" style="left:752px;top:68px;width:125px;height:16px;line-height:18px">enc_trips_sp</div>
<div class="c b r" style="left:26px;top:85px;width:63px;height:17px;line-height:19px">2</div>
<div class="c" style="left:90px;top:85px;width:110px;height:17px;line-height:19px">Denerim</div>
<div class="c r" style="left:201px;top:85px;width:110px;height:17px;line-height:19px">396062</div>
<div class="c" style="left:312px;top:85px;width:117px;height:17px;line-height:19px">denerim</div>
<div class="c" style="left:430px;top:85px;width:170px;height:17px;line-height:19px">target_wps_denerim</div>
<div class="c m" style="left:601px;top:85px;width:150px;height:17px;line-height:19px">1013</div>
<div class="c" style="left:752px;top:85px;width:125px;height:17px;line-height:19px">enc_trips_sp</div>
<div class="c b r" style="left:26px;top:103px;width:63px;height:16px;line-height:18px">3</div>
<div class="c" style="left:90px;top:103px;width:110px;height:16px;line-height:18px">Underground</div>
<div class="c r" style="left:201px;top:103px;width:110px;height:16px;line-height:18px">396063</div>
<div class="c" style="left:312px;top:103px;width:117px;height:16px;line-height:18px">underground</div>
<div class="c" style="left:430px;top:103px;width:170px;height:16px;line-height:18px">target_wps_underground</div>
<div class="c m" style="left:601px;top:103px;width:150px;height:16px;line-height:18px">1014</div>
<div class="c" style="left:752px;top:103px;width:125px;height:16px;line-height:18px">enc_trips_sp</div>
<div class="c b r" style="left:26px;top:120px;width:63px;height:16px;line-height:18px">4</div>
<div class="c" style="left:90px;top:120px;width:110px;height:16px;line-height:18px">Denerim - Climax</div>
<div class="c r" style="left:201px;top:120px;width:110px;height:16px;line-height:18px">396064</div>
<div class="c" style="left:312px;top:120px;width:117px;height:16px;line-height:18px">denerim</div>
<div class="c" style="left:430px;top:120px;width:170px;height:16px;line-height:18px">target_wps_climax_denerim</div>
<div class="c m" style="left:601px;top:120px;width:150px;height:16px;line-height:18px">1015</div>
<div class="c" style="left:752px;top:120px;width:125px;height:16px;line-height:18px">enc_trips_sp_cli</div>
<div class="c b r" style="left:26px;top:137px;width:63px;height:16px;line-height:18px">5</div>
<div class="c" style="left:90px;top:137px;width:110px;height:16px;line-height:18px">The Fade</div>
<div class="c r" style="left:201px;top:137px;width:110px;height:16px;line-height:18px">396065</div>
<div class="c" style="left:312px;top:137px;width:117px;height:16px;line-height:18px">fade_temp</div>
<div class="c" style="left:430px;top:137px;width:170px;height:16px;line-height:18px">target_wps_fade</div>
<div class="c m" style="left:601px;top:137px;width:150px;height:16px;line-height:18px">1016</div>
<div class="c" style="left:752px;top:137px;width:125px;height:16px;line-height:18px">INVALID</div>
<div class="bh" style="left:26px;top:33px;width:852px"></div>
<div class="bh" style="left:26px;top:50px;width:852px"></div>
<div class="bh" style="left:26px;top:67px;width:404px"></div>
<div class="bh" style="left:26px;top:84px;width:404px"></div>
<div class="bh" style="left:600px;top:67px;width:153px"></div>
<div class="bh" style="left:600px;top:84px;width:153px"></div>
<div class="bh" style="left:600px;top:102px;width:153px"></div>
<div class="bh" style="left:600px;top:119px;width:153px"></div>
<div class="bh" style="left:600px;top:136px;width:153px"></div>
<div class="bh" style="left:600px;top:153px;width:153px"></div>
<div class="bv" style="left:89px;top:17px;height:68px"></div>
<div class="bv" style="left:200px;top:17px;height:68px"></div>
<div class="bv" style="left:311px;top:17px;height:68px"></div>
<div class="bv" style="left:429px;top:17px;height:68px"></div>
<div class="bv" style="left:600px;top:17px;height:137px"></div>
<div class="bv" style="left:751px;top:17px;height:137px"></div>
<div class="bv" style="left:877px;top:17px;height:34px"></div>
<div class="cmt" style="left:871px;top:17px"></div>
<div class="selbox" style="left:310px;top:152px;width:121px;height:20px"></div><div class="fillh" style="left:426px;top:167px"></div>
</div>
<div class="vsb">
<div class="vsplit"></div>
<div class="tri" style="left:4px;top:14px;border-left:4px solid transparent;border-right:4px solid transparent;border-bottom:5px solid #3d4f7a"></div>
<div class="thumbv"><div style="left:3px;top:160px;width:7px;height:7px;background:repeating-linear-gradient(#5f7cab 0,#5f7cab 1px,#eef3f9 1px,#eef3f9 2px)"></div></div>
<div class="tri" style="left:4px;top:395px;border-left:4px solid transparent;border-right:4px solid transparent;border-top:5px solid #3d4f7a"></div>
</div>
<div class="tabstrip">
<svg width="60" height="16" viewBox="0 0 60 16" style="left:0;top:0"><g fill="#15428b"><rect x="6" y="5" width="1.5" height="7"/><path d="M12.5 5v7l-4.5-3.500z M25.500 5v7l-4.500-3.500z M36.500 5v7l4.500-3.500z M50.500 5v7l4.500-3.500z"/><rect x="55.300" y="5" width="1.500" height="7"/></g></svg>
<svg width="600" height="16" viewBox="0 0 600 16" style="left:0;top:0">
<defs><linearGradient id="tg" x1="0" y1="0" x2="0" y2="1"><stop offset="0" stop-color="#f6f9fd"/><stop offset=".45" stop-color="#dbe7f6"/><stop offset=".5" stop-color="#c6d9f1"/><stop offset="1" stop-color="#d3e2f5"/></linearGradient></defs>
<path d="M143 16 L156 0.500 H600 V16 Z" fill="url(#tg)"/>
<path d="M156 0.500 H600" stroke="#8aa5d0" fill="none"/>
<path d="M143.500 15.500 L156 0.500 M241.500 15.500 L254 0.500 M353.500 15.500 L366 0.500 M501.500 15.500 L514 0.500" stroke="#6f8dbd" stroke-width="1.100" fill="none"/>
<path d="M62.500 0 V11 Q62.500 15.500 67 15.500 H143.500 L156 0.500 V0 Z" fill="#fff" stroke="#7f9bc8"/>
<rect x="63" y="0" width="93" height="1" fill="#fff"/>
</svg>
<div class="stab" style="left:72px;font-weight:bold">worldmaps</div>
<div class="stab" style="left:160px">terrain_types</div>
<div class="stab" style="left:260px">location_states</div>
<div class="stab" style="left:373px">state_image_suffixes</div>
<div class="stab" style="left:518px">map_pin_im</div>
</div>
<div class="split"><i style="left:1px;top:3px;width:1px;height:6px;background:#7f9bc8"></i></div>
<div class="hsb">
<div class="tri" style="left:5px;top:4px;border-top:4px solid transparent;border-bottom:4px solid transparent;border-right:5px solid #3d4f7a"></div>
<div class="thumbh"><div style="left:156px;top:3px;width:7px;height:7px;background:repeating-linear-gradient(90deg,#5f7cab 0,#5f7cab 1px,#eef3f9 1px,#eef3f9 2px)"></div></div>
<div class="tri" style="left:440px;top:4px;border-top:4px solid transparent;border-bottom:4px solid transparent;border-left:5px solid #3d4f7a"></div>
<div style="left:450px;top:1px;width:6px;height:14px;background:#fff;border:1px solid #b7c9e3"><i style="left:1px;top:3px;width:1px;height:6px;background:#7f9bc8"></i></div>
</div>
<div class="sbcorner"></div>
<div class="status">
<div class="t" style="left:8px;top:4px;letter-spacing:-.8px">Ready</div>
<div class="ssep" style="left:45px"></div>
<div class="status2"></div>
<div class="ssep" style="left:802px"></div>
<div style="left:810px;top:2px;width:18px;height:20px;background:linear-gradient(#ffe9ae,#ffd466 50%,#ffc640);border:1px solid #e0ae52"></div>
<div style="left:828px;top:2px;width:37px;height:20px;background:linear-gradient(#dbe7f8,#c3d8f4 50%,#b3cdf0);border:1px solid #a9c2e6;border-left:0"></div>
<div style="left:846px;top:3px;width:1px;height:18px;background:#a9c2e6"></div>
<svg style="left:813px;top:6px" width="13" height="12" viewBox="0 0 13 12"><rect x=".5" y=".5" width="12" height="10" fill="#fff" stroke="#6b6b6b"/><path d="M.5 3.500h12M.5 6.500h12M4.500 .5v10M8.500 .5v10" stroke="#6b6b6b"/></svg>
<svg style="left:830px;top:5px" width="14" height="13" viewBox="0 0 14 13"><rect x=".5" y=".5" width="13" height="12" fill="#c9c9c9" stroke="#5f5f5f"/><rect x="3.500" y="2.500" width="7" height="8" fill="#fff" stroke="#6b6b6b"/><path d="M5 5h4M5 7h4" stroke="#999"/></svg>
<svg style="left:849px;top:5px" width="14" height="13" viewBox="0 0 14 13"><rect x=".5" y=".5" width="13" height="12" fill="#b9b9b9" stroke="#5f5f5f"/><path d="M2.500 1.500h4v6h-4zM7.500 1.500h4v6h-4z" fill="#fff" stroke="#6b6b6b" stroke-width=".8"/></svg>
<div class="t" style="left:873px;top:4px;letter-spacing:-.6px">100%</div>
<div style="left:926px;top:10px;width:110px;height:2px;background:linear-gradient(#6f86ab 1px,#eef4fc 1px)"></div>
<div class="zc" style="left:909px"><i style="left:4px;top:7px;width:8px;height:2px;background:#3c4a66"></i></div>
<div class="zc" style="left:1027px"><i style="left:4px;top:7px;width:8px;height:2px;background:#3c4a66"></i><i style="left:7px;top:4px;width:2px;height:8px;background:#3c4a66"></i></div>
<svg style="left:971px;top:3px" width="11" height="15" viewBox="0 0 11 15"><path d="M1.500 1.500h8v8l-4 4-4-4z" fill="#e9eef6" stroke="#5b6f95"/><path d="M5.500 3v6" stroke="#9aa8c4"/></svg>
<svg style="left:1052px;top:7px" width="12" height="13" viewBox="0 0 12 13"><g fill="#41557f"><rect x="9" y="1" width="2" height="2"/><rect x="5" y="5" width="2" height="2"/><rect x="9" y="5" width="2" height="2"/><rect x="1" y="9" width="2" height="2"/><rect x="5" y="9" width="2" height="2"/><rect x="9" y="9" width="2" height="2"/></g></svg>
</div>
</div>
</body></html>
